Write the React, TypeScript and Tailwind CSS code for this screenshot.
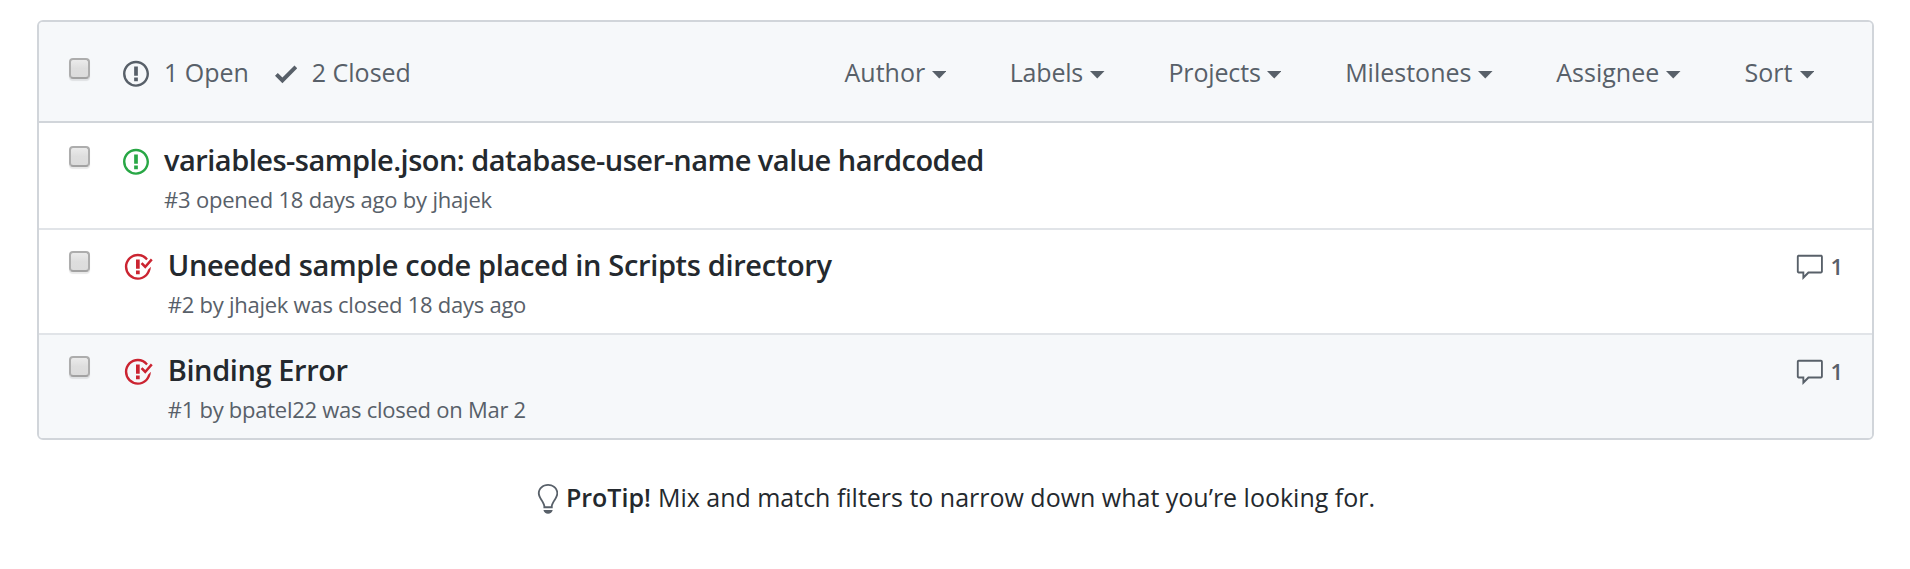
type IconProps = { className?: string };

const IssueOpened = ({ className = "" }: IconProps) => (
  <svg viewBox="0 0 14 16" width="26" height="29.71" fill="currentColor" className={`shrink-0 ${className}`}>
    <path d="M7 2.3c3.14 0 5.7 2.56 5.7 5.7s-2.56 5.7-5.7 5.7A5.71 5.71 0 0 1 1.3 8c0-3.14 2.56-5.7 5.7-5.7zM7 1C3.14 1 0 4.14 0 8s3.14 7 7 7 7-3.14 7-7-3.14-7-7-7zm1 3H6v5h2V4zm0 6H6v2h2v-2z" />
  </svg>
);

const IssueClosed = ({ className = "" }: IconProps) => (
  <svg viewBox="0 0 16 16" width="29.71" height="29.71" fill="currentColor" className={`shrink-0 ${className}`}>
    <path d="M7 10h2v2H7v-2zm2-6H7v5h2V4zm1.5 1.5l-1 1L12 9l4-4.5-1-1L12 7l-1.5-1.5zM8 13.7A5.71 5.71 0 0 1 2.3 8c0-3.14 2.56-5.7 5.7-5.7 1.83 0 3.45.88 4.5 2.2l.92-.92A6.947 6.947 0 0 0 8 1C4.14 1 1 4.14 1 8s3.14 7 7 7 7-3.14 7-7l-1.52 1.52c-.66 2.41-2.86 4.19-5.48 4.19v-.01z" />
  </svg>
);

const Check = ({ className = "" }: IconProps) => (
  <svg viewBox="0 0 12 16" width="22.28" height="29.71" fill="currentColor" className={`shrink-0 ${className}`}>
    <path d="M12 5l-8 8-4-4 1.5-1.5L4 10l6.5-6.5z" />
  </svg>
);

const Comment = () => (
  <svg viewBox="0 0 16 16" width="29.71" height="29.71" fill="currentColor" className="mt-[2px] shrink-0">
    <path d="M14 1H2c-.55 0-1 .45-1 1v8c0 .55.45 1 1 1h2v3.5L7.5 11H14c.55 0 1-.45 1-1V2c0-.55-.45-1-1-1zm0 9H7l-2 2v-2H2V2h12v8z" />
  </svg>
);

const LightBulb = () => (
  <svg viewBox="0 0 12 16" width="22.28" height="29.71" fill="currentColor" className="mt-[4px] shrink-0 text-[#586069]">
    <path d="M6.5 0C3.48 0 1 2.19 1 5c0 .92.55 2.25 1 3 1.34 2.25 1.78 2.78 2 4v1h5v-1c.22-1.22.66-1.75 2-4 .45-.75 1-2.08 1-3 0-2.81-2.48-5-5.5-5zm3.64 7.48c-.25.44-.47.8-.67 1.11-.86 1.41-1.25 2.06-1.45 3.23-.02.05-.02.11-.02.17H5c0-.06 0-.13-.02-.17-.2-1.17-.59-1.83-1.45-3.23-.2-.31-.42-.67-.67-1.11C2.44 6.78 2 5.65 2 5c0-2.2 2.02-4 4.5-4 1.22 0 2.36.42 3.22 1.19C10.55 2.94 11 3.94 11 5c0 .66-.44 1.78-.86 2.48zM4 14h5c-.23 1.14-1.3 2-2.5 2s-2.27-.86-2.5-2z" />
  </svg>
);

const Checkbox = () => (
  <input
    type="checkbox"
    className="size-[21px] shrink-0 appearance-none rounded-[4px] border-2 border-[#adadad] border-b-[#a2a2a2] bg-linear-to-b from-[#ebebeb] via-[#dedede] to-[#dcdcdc] shadow-[0_2px_1px_rgba(0,0,0,0.09)]"
  />
);

const filters = [
  { label: "Author", width: "w-[101.5px]", spacing: "tracking-normal" },
  { label: "Labels", width: "w-[95px]", spacing: "tracking-[-0.2px]" },
  { label: "Projects", width: "w-[113px]", spacing: "tracking-[-0.15px]" },
  { label: "Milestones", width: "w-[147.5px]", spacing: "tracking-normal" },
  { label: "Assignee", width: "w-[124.5px]", spacing: "tracking-normal" },
  { label: "Sort", width: "w-[69.5px]", spacing: "tracking-normal" },
];

type Issue = {
  title: string;
  meta: string;
  open: boolean;
  comments?: number;
  row: string;
  titleSpacing: string;
  metaSpacing: string;
};

const issues: Issue[] = [
  {
    title: "variables-sample.json: database-user-name value hardcoded",
    meta: "#3 opened 18 days ago by jhajek",
    open: true,
    row: "h-[105px] pt-[2px]",
    titleSpacing: "tracking-[-0.52px]",
    metaSpacing: "tracking-[-0.21px]",
  },
  {
    title: "Uneeded sample code placed in Scripts directory",
    meta: "#2 by jhajek was closed 18 days ago",
    open: false,
    comments: 1,
    row: "h-[105px] border-t-2 border-[#e1e4e8]",
    titleSpacing: "tracking-[-0.34px]",
    metaSpacing: "tracking-[-0.25px]",
  },
  {
    title: "Binding Error",
    meta: "#1 by bpatel22 was closed on Mar 2",
    open: false,
    comments: 1,
    row: "h-[105px] border-t-2 border-[#e1e4e8] bg-[#f6f8fa]",
    titleSpacing: "tracking-[-0.4px]",
    metaSpacing: "tracking-[-0.26px]",
  },
];

const IssueRow = ({ issue }: { issue: Issue }) => (
  <li className={`flex items-start pl-[30px] pr-[29px] ${issue.row}`}>
    <div className="flex pt-[21px]">
      <Checkbox />
    </div>
    <div className="ml-[33px] pt-[22px]">
      {issue.open ? <IssueOpened className="text-[#28a745]" /> : <IssueClosed className="text-[#cb2431]" />}
    </div>
    <div className="ml-[15px] flex-1 pt-[15px] whitespace-nowrap">
      <a className={`block text-[29px] leading-[40px] font-semibold text-[#24292e] ${issue.titleSpacing}`}>{issue.title}</a>
      <p className={`pt-[3px] text-[22px] leading-[32px] text-[#586069] ${issue.metaSpacing}`}>{issue.meta}</p>
    </div>
    {issue.comments && (
      <div className="flex items-start gap-[6px] pt-[21px] text-[22px] leading-[30px] font-semibold text-[#586069]">
        <Comment />
        <span>{issue.comments}</span>
      </div>
    )}
  </li>
);

export default function App() {
  return (
    <div className="h-[569px] overflow-hidden bg-white pt-5 pr-9 pl-[37px] font-['Open_Sans',sans-serif] text-[25px] text-[#586069]">
      <section className="overflow-hidden rounded-[6px] border-2 border-[#d1d5da]">
        <header className="flex h-[101px] items-start border-b-2 border-[#d1d5da] bg-[#f6f8fa] pl-[30px] pr-[58px] leading-[34px] whitespace-nowrap">
          <div className="flex pt-[36px]">
            <Checkbox />
          </div>
          <a className="ml-[33px] flex pt-[33px]">
            <IssueOpened className="mt-[4px]" />
            <span className="ml-[15px] w-[85px]">1 Open</span>
          </a>
          <a className="ml-[26px] flex pt-[33px]">
            <Check className="mt-[4px]" />
            <span className="ml-[14.5px]">2 Closed</span>
          </a>
          <nav className="ml-auto flex gap-[63.7px] pt-[33px]">
            {filters.map(({ label, width, spacing }) => (
              <a key={label} className={`flex justify-between ${width} ${spacing}`}>
                {label}
                <svg width="14.5" height="8" viewBox="0 0 14.5 8" className="mt-[16px] shrink-0" fill="currentColor">
                  <path d="M0 0h14.5L7.25 7.6z" />
                </svg>
              </a>
            ))}
          </nav>
        </header>
        <ul>
          {issues.map((issue) => (
            <IssueRow key={issue.title} issue={issue} />
          ))}
        </ul>
      </section>
      <footer className="mt-[40px] flex pl-[499px] leading-[34px] whitespace-nowrap text-[#24292e]">
        <LightBulb />
        <strong className="ml-[7.7px] font-semibold">ProTip!</strong>
        <span className="ml-[7px] tracking-[-0.01px]">Mix and match filters to narrow down what you’re looking for.</span>
      </footer>
    </div>
  );
}
